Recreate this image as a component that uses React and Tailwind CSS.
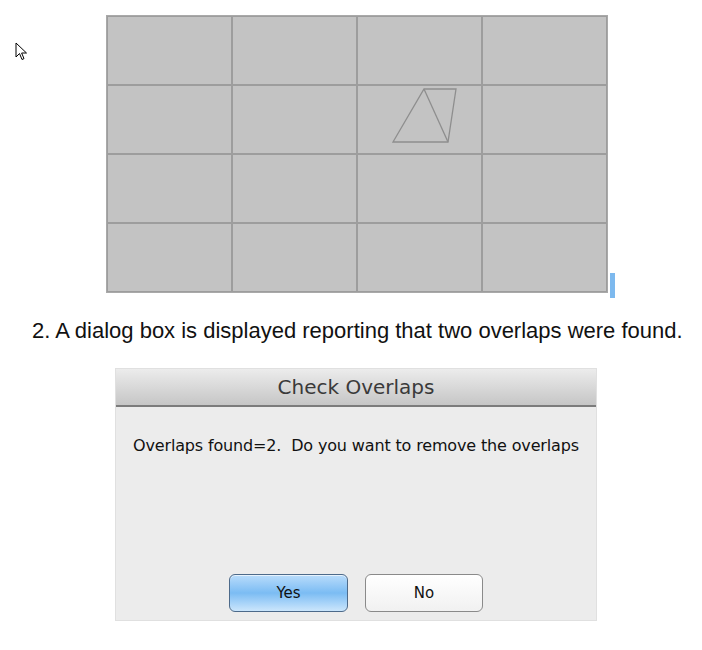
import React from 'react';

// mouse pointer in the margin next to the layout
const Pointer = () => (
  <svg width="14" height="20" viewBox="0 0 14 20" className="block">
    <path
      d="M1 1 L1 15 L4.5 11.5 L7 17.5 L9 16.6 L6.6 11 L11.5 11 Z"
      fill="#ffffff"
      stroke="#000000"
      strokeWidth="1"
      strokeLinejoin="miter"
    />
  </svg>
);

const Cell = ({ children }) => (
  <div className="relative h-[67px] bg-[#c3c3c3]">{children}</div>
);

// split quad drawn in the middle of the tile layout
const Shape = () => (
  <svg className="absolute inset-0" width="123" height="67" viewBox="0 0 123 67">
    <g fill="none" stroke="#8e8e8e" strokeWidth="1.3">
      <path d="M66 3 L98 3 L90 56 L35 56 Z" />
      <path d="M66 3 L90 56" />
    </g>
  </svg>
);

const TileGrid = () => {
  const cells = Array.from({ length: 16 }, (_, i) => i);
  return (
    <div className="grid w-[502px] grid-cols-4 gap-[2px] border border-[#a9a9a9] bg-[#9d9d9d] p-[1px]">
      {cells.map((i) => (
        <Cell key={i}>{i === 6 && <Shape />}</Cell>
      ))}
    </div>
  );
};

const Dialog = () => (
  <div className="ml-[115px] w-[482px] border border-[#e0e0e0] bg-[#ececec] font-['DejaVu_Sans',sans-serif]">
    {/* title bar */}
    <div className="flex h-[38px] items-center justify-center border-b-2 border-[#7c7c7c] bg-gradient-to-b from-[#ececec] to-[#c6c6c6]">
      <span className="text-[20px] text-[#3a3a3a]">Check Overlaps</span>
    </div>
    <div className="flex h-[213px] flex-col">
      <p className="mt-[27px] pl-[17px] text-[16px] tracking-[-0.15px] text-[#111]">
        Overlaps found=2.&nbsp; Do you want to remove the overlaps
      </p>
      <div className="mt-auto mb-[8px] flex justify-center gap-[17px]">
        <button className="h-[38px] w-[119px] rounded-[6px] border border-[#4d6a8a] bg-gradient-to-b from-[#b9dcfb] via-[#7bbcf3] to-[#cbe6fc] text-[15px] text-[#111] shadow-[inset_0_1px_0_#e6f2fd]">
          Yes
        </button>
        <button className="h-[38px] w-[118px] rounded-[6px] border border-[#8a8a8a] bg-gradient-to-b from-[#ffffff] to-[#f1f1f1] text-[15px] text-[#111]">
          No
        </button>
      </div>
    </div>
  </div>
);

export default function App() {
  return (
    <div className="h-[650px] w-[702px] bg-white font-['Liberation_Sans',Arial,sans-serif]">
      <div className="flex pt-[15px]">
        <div className="ml-[15px] mt-[27px]">
          <Pointer />
        </div>
        <div className="ml-[77px]">
          <TileGrid />
        </div>
        <div className="ml-[2px] mt-[258px] h-[25px] w-[5px] bg-[#7db9ee]" />
      </div>
      <p className="mt-[16px] pl-[32px] text-[22px] text-[#111]">
        2. A dialog box is displayed reporting that two overlaps were found.
      </p>
      <div className="mt-[21px]">
        <Dialog />
      </div>
    </div>
  );
}
